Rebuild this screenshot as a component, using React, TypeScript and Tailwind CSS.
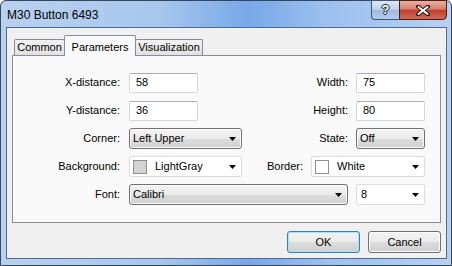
import React from "react";

const Arrow = () => (
  <svg width="7" height="4" viewBox="0 0 7 4" className="shrink-0">
    <polygon points="0,0 7,0 3.5,4" fill="#000" />
  </svg>
);

const TextBox = ({ value }: { value: string }) => (
  <div className="w-[69px] h-[20px] bg-white border border-[#d3d6db] border-t-[#abadb3] rounded-[2px] flex items-center pl-[6px]">
    {value}
  </div>
);

const DropList = ({ value, w }: { value: string; w: string }) => (
  <div
    className={`${w} h-[21px] border border-[#707070] rounded-[3px] flex items-center justify-between pl-[3px] pr-[5px] bg-[linear-gradient(#f2f2f2_0%,#ebebeb_50%,#dddddd_51%,#cfcfcf_100%)] shadow-[inset_0_0_0_1px_#fcfcfc]`}
  >
    <span>{value}</span>
    <Arrow />
  </div>
);

const Combo = ({ value, w, swatch }: { value: string; w: string; swatch?: string }) => (
  <div className={`${w} h-[21px] bg-white border border-[#dcdcdc] rounded-[2px] flex items-center pr-[5px]`}>
    {swatch ? (
      <>
        <div className="ml-[3px] w-[14px] h-[14px] border border-[#8e8f8f]" style={{ background: swatch }} />
        <span className="ml-[8px]">{value}</span>
      </>
    ) : (
      <span className="ml-[4px]">{value}</span>
    )}
    <span className="ml-auto">
      <Arrow />
    </span>
  </div>
);

const Row = ({
  label,
  left,
  rlabel,
  right,
}: {
  label: string;
  left: React.ReactNode;
  rlabel: string;
  right: React.ReactNode;
}) => (
  <div className="flex items-center h-[21px]">
    <div className="w-[107px] text-right">{label}</div>
    <div className="ml-[9px]">{left}</div>
    <div className="ml-auto flex items-center pr-[15px]">
      {rlabel && <span>{rlabel}</span>}
      <div className="ml-[8px]">{right}</div>
    </div>
  </div>
);

export default function App() {
  return (
    <div className="w-[452px] h-[266px] font-['Liberation_Sans',Arial,sans-serif] text-[11px] text-black">
      <div className="w-full h-full flex flex-col rounded-t-[6px] border border-[#34475f] bg-[linear-gradient(90deg,#b9d1ee_0%,#a8c7ee_35%,#77a8e8_55%,#9cc0ef_72%,#b7d1f1_100%)] pl-[5px] pr-[4px] pb-[6px]">
        {/* title bar */}
        <div className="h-[26px] flex items-start shrink-0">
          <div className="pl-[1px] pt-[7px] text-[12px] leading-[14px] text-black">M30 Button 6493</div>
          <div className="ml-auto flex -mt-px">
            <div className="w-[28px] h-[20px] border border-[#3d5574] border-r-0 rounded-bl-[4px] bg-[linear-gradient(#dfe8f4_0%,#bcd0ea_48%,#9fb9de_52%,#b5cdea_100%)] flex items-center justify-center">
              <span className="font-bold text-[13px] text-white [text-shadow:0_0_1px_#1d2c44,0_0_1px_#1d2c44,1px_0_0_#1d2c44,-1px_0_0_#1d2c44,0_1px_0_#1d2c44,0_-1px_0_#1d2c44]">
                ?
              </span>
            </div>
            <div className="w-[48px] h-[20px] border border-[#4a1c14] rounded-br-[4px] bg-[linear-gradient(#e8b1a4_0%,#d47f6c_45%,#c0402a_52%,#cf6a52_100%)] flex items-center justify-center">
              <svg width="14" height="11" viewBox="0 0 14 11">
                <path d="M2 1.5 L12 9.5 M12 1.5 L2 9.5" stroke="#2a1a18" strokeWidth="4" strokeLinecap="round" />
                <path d="M2.5 2 L11.5 9 M11.5 2 L2.5 9" stroke="#ffffff" strokeWidth="2" strokeLinecap="round" />
              </svg>
            </div>
          </div>
        </div>

        {/* client area */}
        <div className="flex-1 border border-[#4b6a94] bg-[#f0f0f0] flex flex-col pt-[7px] px-[5px]">
          {/* tabs */}
          <div className="flex items-end ml-[2px] h-[20px] relative z-10">
            <div className="w-[51px] h-[16px] border border-[#898c95] border-b-0 rounded-t-[2px] bg-[linear-gradient(#f2f2f2,#e1e1e1)] flex items-center justify-center">
              Common
            </div>
            <div className="w-[72px] h-[21px] -mx-[1px] -mb-px border border-[#898c95] border-b-0 rounded-t-[2px] bg-[#f9f9f9] flex items-start justify-center pt-[3px] relative z-10">
              Parameters
            </div>
            <div className="w-[68px] h-[16px] border border-[#898c95] border-b-0 rounded-t-[2px] bg-[linear-gradient(#f2f2f2,#e1e1e1)] flex items-center justify-center">
              Visualization
            </div>
          </div>

          {/* tab page */}
          <div className="h-[168px] border border-[#898c95] bg-[#f9f9f9] flex flex-col gap-[7px] pt-[16px]">
            <Row label="X-distance:" left={<TextBox value="58" />} rlabel="Width:" right={<TextBox value="75" />} />
            <Row label="Y-distance:" left={<TextBox value="36" />} rlabel="Height:" right={<TextBox value="80" />} />
            <Row
              label="Corner:"
              left={<DropList value="Left Upper" w="w-[113px]" />}
              rlabel="State:"
              right={<DropList value="Off" w="w-[69px]" />}
            />
            <Row
              label="Background:"
              left={<Combo value="LightGray" w="w-[113px]" swatch="#d3d3d3" />}
              rlabel="Border:"
              right={<Combo value="White" w="w-[114px]" swatch="#ffffff" />}
            />
            <Row
              label="Font:"
              left={<DropList value="Calibri" w="w-[219px]" />}
              rlabel=""
              right={<Combo value="8" w="w-[69px]" />}
            />
          </div>

          {/* buttons */}
          <div className="flex justify-end gap-[8px] mt-[8px]">
            <div className="w-[73px] h-[22px] border border-[#3c7fb1] rounded-[3px] shadow-[inset_0_0_0_1px_#a5e3fb] bg-[linear-gradient(#f2f2f2_0%,#ebebeb_50%,#dddddd_51%,#cfcfcf_100%)] flex items-center justify-center">
              OK
            </div>
            <div className="w-[73px] h-[22px] border border-[#707070] rounded-[3px] shadow-[inset_0_0_0_1px_#fcfcfc] bg-[linear-gradient(#f2f2f2_0%,#ebebeb_50%,#dddddd_51%,#cfcfcf_100%)] flex items-center justify-center">
              Cancel
            </div>
          </div>
        </div>
      </div>
    </div>
  );
}
